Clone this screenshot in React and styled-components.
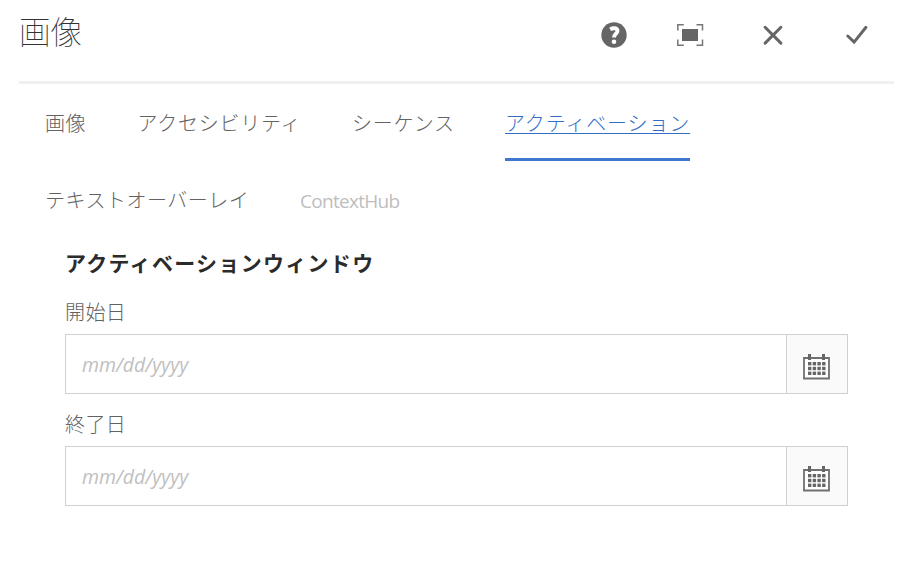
import React from "react";
import styled, { createGlobalStyle } from "styled-components";

const Global = createGlobalStyle`
  * { box-sizing: border-box; }
  body { margin: 0; background: #fff; color: #6b6b6b; font-family: "Noto Sans CJK JP", sans-serif; overflow: hidden; }
`;
const Dialog = styled.main`
  width: 910px;
  height: 572px;
  padding: 0 16px 0 19px;
  background: #fff;
`;
const Header = styled.header`
  display: flex;
  justify-content: space-between;
  height: 84px;
  border-bottom: 3px solid #f0f0f0;
`;
const Title = styled.h1`
  margin: 0;
  font-size: 31.5px;
  line-height: 60px;
  font-weight: 100;
  color: #323232;
`;
const Actions = styled.div`
  display: flex;
  align-items: flex-start;
  margin-right: -1px;
`;
const Action = styled.button`
  display: flex;
  justify-content: center;
  width: ${(p) => p.$w}px;
  height: 70px;
  padding: 0;
  border: 0;
  background: none;
  svg { display: block; }
`;
const Tabs = styled.nav`
  display: flex;
  flex-wrap: wrap;
  column-gap: 50px;
  padding-left: 26px;
  height: 154px;
`;
const Tab = styled.a`
  height: 77px;
  width: ${(p) => p.$w}px;
  font-family: "Noto Sans", "Noto Sans CJK JP", sans-serif;
  font-size: 20px;
  font-weight: 300;
  line-height: 79px;
  white-space: nowrap;
  letter-spacing: ${(p) => p.$ls || 0}px;
  text-indent: ${(p) => p.$indent || 0}px;
  color: ${(p) => (p.$active ? "#326ec8" : p.$muted ? "#bebebe" : "#626262")};
  border-bottom: ${(p) => (p.$active ? "3px solid #3f77d0" : "0")};
  text-decoration: ${(p) => (p.$active ? "underline" : "none")};
  text-decoration-thickness: 1px;
  text-underline-offset: 2px;
`;
const Latin = styled.span`
  display: block;
  font-family: "Open Sans", sans-serif;
  font-weight: 400;
  font-size: 19px;
  line-height: 81px;
  letter-spacing: -0.7px;
`;
const Panel = styled.section`
  width: 829px;
  padding: 11px 0 0 46px;
`;
const Heading = styled.h3`
  margin: 0;
  height: 30px;
  font-size: 21px;
  line-height: 27px;
  font-weight: 700;
  letter-spacing: 1.3px;
  white-space: nowrap;
  color: #2b2b2b;
`;
const Field = styled.div`
  height: 112px;
  padding-top: 15px;
`;
const Label = styled.label`
  display: block;
  height: 40px;
  font-size: 20px;
  font-weight: 300;
  line-height: 36px;
  letter-spacing: 0.4px;
  color: #626262;
`;
const InputGroup = styled.div`
  display: flex;
  width: 783px;
  height: 60px;
  border: 1px solid #d0d0d0;
`;
const Input = styled.input`
  flex: 1;
  min-width: 0;
  padding: 1px 16px 0;
  border: 0;
  outline: 0;
  background: #fff;
  font: italic 400 19.5px "Open Sans", sans-serif;
  &::placeholder { color: #c0c0c0; opacity: 1; }
`;
const CalendarButton = styled.button`
  width: 61px;
  padding: 0;
  border: 0;
  border-left: 1px solid #d0d0d0;
  background: #fafafa;
  svg { display: block; margin: 5px 0 0 15px; }
`;

const HelpIcon = () => (
  <svg width="28" height="70" viewBox="0 0 28 70">
    <circle cx="14" cy="35" r="12.7" fill="#666" />
    <path d="M10.2 29.3c1.3-.8 2.8-1.2 4.2-1.1 1.9.1 3.2 1.1 3.1 2.8-.1 2.5-3.5 3-3.5 6.5" fill="none" stroke="#fff" strokeWidth="3.9" />
    <circle cx="14" cy="41.7" r="2.3" fill="#fff" />
  </svg>
);
const FullscreenIcon = () => (
  <svg width="28" height="70" viewBox="0 0 28 70">
    <path d="M1.8 30.5v-5.7h6M20.5 24.8h6v5.7M26.5 39.5v5.7h-6M7.8 45.2h-6v-5.7" fill="none" stroke="#777" strokeWidth="1.5" />
    <path d="M6 29h16v12H6z" fill="#666" />
  </svg>
);
const CloseIcon = () => (
  <svg width="28" height="70" viewBox="0 0 28 70">
    <path d="M6.1 27.3l15.8 15.8M21.9 27.3L6.1 43.1" stroke="#666" strokeWidth="3" strokeLinecap="round" />
  </svg>
);
const CheckIcon = () => (
  <svg width="28" height="70" viewBox="0 0 28 70">
    <path d="M4.8 36l6.3 6.1L23 27.3" fill="none" stroke="#666" strokeWidth="3" strokeLinecap="round" />
  </svg>
);
const dots = [0, 1, 2].flatMap((r) => [0, 1, 2, 3].map((c) => [c, r]));
const CalendarIcon = () => (
  <svg width="30" height="28" viewBox="0 0 30 28">
    <path d="M2 5h25v20.5H2z" fill="#fff" stroke="#707070" strokeWidth="1.8" />
    <path d="M7.5 1v6M21.5 1v6" stroke="#666" strokeWidth="3" />
    {dots.map(([c, r]) => (
      <rect key={`${c}-${r}`} x={6 + c * 4.7} y={9 + r * 4.8} width="3.4" height="3.4" fill="#666" />
    ))}
  </svg>
);

const tabs = [
  { text: "画像", w: 41, ls: 0.4 },
  { text: "アクセシビリティ", w: 166, ls: 0.75, indent: 1.5 },
  { text: "シーケンス", w: 103, ls: 0.75 },
  { text: "アクティベーション", w: 185, ls: 0.86, active: true },
  { text: "テキストオーバーレイ", w: 205, ls: 0.5 },
];
const DateField = ({ label }) => (
  <Field>
    <Label>{label}</Label>
    <InputGroup>
      <Input placeholder="mm/dd/yyyy" aria-label={label} />
      <CalendarButton><CalendarIcon /></CalendarButton>
    </InputGroup>
  </Field>
);

export default function App() {
  return (
    <>
      <Global />
      <Dialog>
        <Header>
          <Title>画像</Title>
          <Actions>
            <Action $w={76}><HelpIcon /></Action>
            <Action $w={76}><FullscreenIcon /></Action>
            <Action $w={90}><CloseIcon /></Action>
            <Action $w={77}><CheckIcon /></Action>
          </Actions>
        </Header>
        <Tabs>
          {tabs.map((t) => (
            <Tab key={t.text} $w={t.w} $ls={t.ls} $indent={t.indent} $active={t.active}>{t.text}</Tab>
          ))}
          <Tab $w={100} $muted><Latin>ContextHub</Latin></Tab>
        </Tabs>
        <Panel>
          <Heading>アクティベーションウィンドウ</Heading>
          <DateField label="開始日" />
          <DateField label="終了日" />
        </Panel>
      </Dialog>
    </>
  );
}
